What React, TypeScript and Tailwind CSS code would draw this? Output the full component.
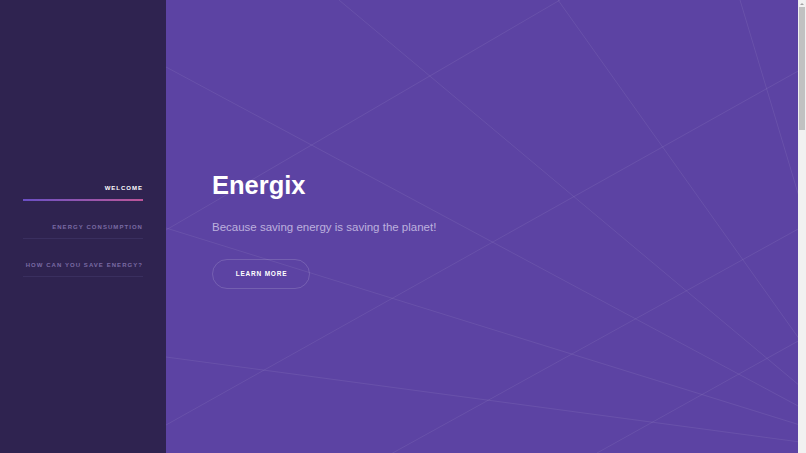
import React from "react";

const lines: [number, number, number, number][] = [
  [173, 0, 634, 386],
  [0, 67, 634, 407],
  [394, 0, 0, 230],
  [0, 425, 634, 70],
  [574, 0, 634, 200],
  [392, 0, 634, 340],
  [634, 228, 214, 460],
  [0, 228, 634, 425],
  [0, 357, 634, 442],
  [634, 340, 431, 453],
];

function NavItem({ label, active }: { label: string; active?: boolean }) {
  return (
    <div className="flex flex-col">
      <div
        className={
          active
            ? "whitespace-nowrap pt-[21px] pb-[6px] text-right text-[6px] leading-[10px] font-bold tracking-[1px] text-white"
            : "whitespace-nowrap pt-[21px] pb-[6px] text-right text-[6px] leading-[10px] font-bold tracking-[1.05px] text-[#7a6ba4]"
        }
      >
        {label}
      </div>
      {active ? (
        <div className="h-[2px] bg-gradient-to-r from-[#6a4ec4] to-[#bd5499]" />
      ) : (
        <div className="h-px bg-[#3a2f5f]" />
      )}
    </div>
  );
}

export default function App() {
  return (
    <div className="flex h-screen overflow-hidden font-['Liberation_Sans',Arial,sans-serif]">
      <aside className="w-[166px] shrink-0 bg-[#2f2350]">
        <nav className="flex flex-col px-[23px] pt-[162px]">
          <NavItem label="WELCOME" active />
          <NavItem label="ENERGY CONSUMPTION" />
          <NavItem label="HOW CAN YOU SAVE ENERGY?" />
        </nav>
      </aside>
      <main className="relative flex-1 overflow-hidden bg-[#5c43a3]">
        <svg
          className="absolute inset-0 h-full w-full"
          viewBox="0 0 632 453"
          preserveAspectRatio="none"
        >
          {lines.map(([x1, y1, x2, y2], i) => (
            <line
              key={i}
              x1={x1}
              y1={y1}
              x2={x2}
              y2={y2}
              stroke="rgba(255,255,255,0.075)"
              strokeWidth="1"
            />
          ))}
        </svg>
        <section className="relative flex h-full flex-col justify-center pl-[46px] pt-[5px]">
          <h1 className="text-[25.5px] leading-[30px] font-bold text-white">Energix</h1>
          <p className="mt-[19px] text-[11.5px] leading-[16px] text-[#bdb1de]">
            Because saving energy is saving the planet!
          </p>
          <div className="mt-[24px]">
            <button className="flex h-[30px] w-[98px] items-center justify-center rounded-full border border-white/15 pl-[1px] text-[6.5px] font-bold tracking-[0.8px] text-white">
              LEARN MORE
            </button>
          </div>
        </section>
      </main>
      <div className="flex w-[8px] shrink-0 flex-col bg-[#f1f1f1]">
        <div className="flex h-[7px] items-center justify-center">
          <div className="h-0 w-0 border-x-[2px] border-b-[2px] border-x-transparent border-b-[#a3a3a3]" />
        </div>
        <div className="mx-auto h-[123px] w-[6px] bg-[#c1c1c1]" />
      </div>
    </div>
  );
}
